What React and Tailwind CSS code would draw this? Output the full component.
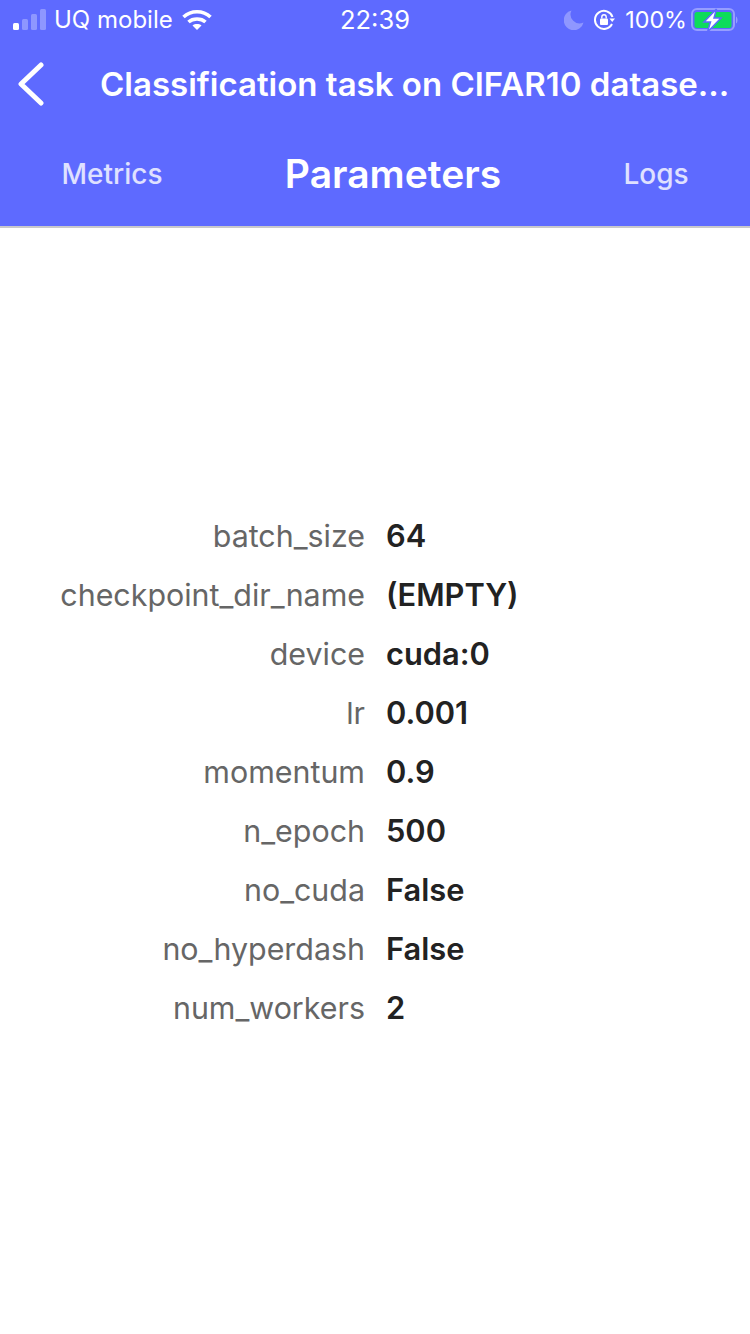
import React from "react";

const params = [
  { name: "batch_size", value: "64" },
  { name: "checkpoint_dir_name", value: "(EMPTY)" },
  { name: "device", value: "cuda:0" },
  { name: "lr", value: "0.001" },
  { name: "momentum", value: "0.9" },
  { name: "n_epoch", value: "500" },
  { name: "no_cuda", value: "False" },
  { name: "no_hyperdash", value: "False" },
  { name: "num_workers", value: "2" },
];

const StatusBar = () => (
  <div className="flex h-[40px] items-center justify-between pl-[13px] pr-[11px] text-[24px] text-white">
    <div className="flex items-center">
      {/* signal bars */}
      <svg width="34" height="22" viewBox="0 0 34 22" fill="#fff">
        <rect x="0" y="14" width="6" height="7" rx="1.5" />
        <rect x="9" y="10" width="6" height="11" rx="1.5" opacity="0.3" />
        <rect x="18" y="5" width="6" height="16" rx="1.5" opacity="0.3" />
        <rect x="27" y="0" width="6" height="21" rx="1.5" opacity="0.3" />
      </svg>
      <span className="ml-[7px]">UQ mobile</span>
      <svg className="ml-[9px]" width="30" height="22" viewBox="0 0 30 22" fill="none" stroke="#fff" strokeWidth="3.6">
        <path d="M1.5 8 C9 1 21 1 28.5 8" />
        <path d="M6.5 13 C11 9 19 9 23.5 13" />
        <path d="M15 21 L10.5 16.5 C13 14.6 17 14.6 19.5 16.5 Z" fill="#fff" stroke="none" />
      </svg>
    </div>
    <span className="absolute left-[340px] text-[25.5px]">22:39</span>
    <div className="flex items-center">
      {/* moon */}
      <svg width="20" height="20" viewBox="0 0 20 20" fill="#fff" opacity="0.3">
        <path d="M7.5 0.5 A10 10 0 1 0 19.5 12.5 A9 9 0 0 1 7.5 0.5 Z" />
      </svg>
      {/* orientation lock */}
      <svg className="ml-[9px]" width="22" height="22" viewBox="0 0 22 22" fill="none" stroke="#fff" strokeWidth="2">
        <path d="M19 15 A9 9 0 1 1 19.5 8" />
        <path d="M22 9.5 L16.5 9.5 L19.2 13 Z" fill="#fff" stroke="none" />
        <rect x="7" y="9.5" width="8" height="6.5" rx="1" fill="#fff" stroke="none" />
        <path d="M8.8 9.5 V8 A2.2 2.2 0 0 1 13.2 8 V9.5" strokeWidth="1.4" />
      </svg>
      <span className="ml-[10px] text-[23.3px]">100%</span>
      {/* battery */}
      <svg className="ml-[4px]" width="48" height="24" viewBox="0 0 48 24" fill="none">
        <rect x="1" y="1" width="42" height="21" rx="5" stroke="#fff" strokeOpacity="0.35" strokeWidth="2" />
        <rect x="3.5" y="4" width="37" height="16" rx="2.5" fill="#0ddc5b" />
        <path d="M45 8.5 C47 9.5 47 14.5 45 15.5 Z" fill="#fff" fillOpacity="0.35" />
        <path d="M25.5 1 L13 14 H19.5 L16.5 24 L30 10 H23 Z" fill="#fff" stroke="#5e6aff" strokeWidth="1.5" />
      </svg>
    </div>
  </div>
);

export default function App() {
  return (
    <div className="relative h-[1334px] w-[750px] bg-white font-['Inter',sans-serif]">
      <header className="border-b-2 border-[#c8c8cc] bg-[#5e6aff]">
        <StatusBar />
        <div className="flex h-[88px] items-center pl-[18px] pr-[10px]">
          <svg width="26" height="44" viewBox="0 0 26 44" fill="none" stroke="#fff" strokeWidth="5" strokeLinecap="round" strokeLinejoin="round">
            <path d="M23 3 L3 22 L23 41" />
          </svg>
          <h1 className="ml-[56px] mt-[2px] truncate text-[33px] font-semibold text-white">
            Classification task on CIFAR10 datase...
          </h1>
        </div>
        <nav className="grid h-[98px] grid-cols-[224px_338px_188px] items-center pb-[6px] text-center">
          <span className="text-[28px] font-medium text-white/80">Metrics</span>
          <span className="text-[39px] font-semibold text-white">Parameters</span>
          <span className="text-[28px] font-medium text-white/80">Logs</span>
        </nav>
      </header>

      <main className="flex flex-col pt-[279px]">
        {params.map((p) => (
          <div key={p.name} className="flex h-[59px] items-center text-[30.4px]">
            <span className="w-[365px] text-right text-[#666666]">{p.name}</span>
            <span className="ml-[21px] text-[30.8px] font-semibold text-[#222222]">{p.value}</span>
          </div>
        ))}
      </main>
    </div>
  );
}
